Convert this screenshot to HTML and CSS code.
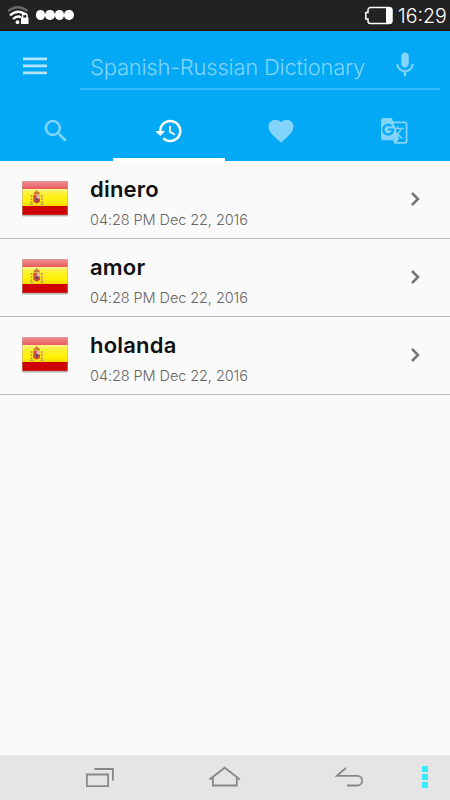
FILE: index.html
```
<!DOCTYPE html>
<html lang="en">
<head>
  <meta charset="UTF-8" />
  <meta name="viewport" content="width=device-width, initial-scale=1.0"/>
  <title>Spanish-Russian Dictionary</title>
  <link rel="stylesheet" href="styles.css">
</head>
<body>

  <!-- shared shapes -->
  <svg class="defs" width="0" height="0">
    <defs>
      <linearGradient id="red-top" x1="0" y1="0" x2="0" y2="1">
        <stop offset="0" stop-color="#f08c8e"/>
        <stop offset="1" stop-color="#e65a5e"/>
      </linearGradient>
      <linearGradient id="yellow" x1="0" y1="0" x2="0" y2="1">
        <stop offset="0" stop-color="#fff58a"/>
        <stop offset="0.3" stop-color="#fdf02c"/>
        <stop offset="0.75" stop-color="#fff000"/>
        <stop offset="1" stop-color="#f6d800"/>
      </linearGradient>
    </defs>
    <symbol id="flag" viewBox="0 0 48 37">
      <rect x="1" y="1.5" width="46" height="35" rx="1.5" fill="#000" opacity="0.25"/>
      <rect x="1" y="1" width="46" height="34.5" rx="1" fill="#b9a9a0"/>
      <rect x="1.5" y="1.4" width="45" height="7.8" fill="url(#red-top)"/>
      <rect x="1.5" y="9" width="45" height="17" fill="url(#yellow)"/>
      <rect x="1.5" y="26" width="45" height="8.8" fill="#ce0000"/>
      <path d="M10.5 15v9M21 15v9" stroke="#c98f78" stroke-width="1.6" stroke-dasharray="2 1"/>
      <path d="M9 24.2h3M19.5 24.2h3" stroke="#8a8a8a" stroke-width="1"/>
      <path d="M12.3 14.8h6.8v6.5q-3.4 4.5-6.8 0z" fill="#cf4f3e"/>
      <path d="M15.7 15H19v3.500h-3.300z" fill="#dcb9c4"/>
      <path d="M15 18.500h1.800v2.200H15z" fill="#34406e"/>
      <path d="M12.800 14.200q-.6-2.700 3-3 3.500.3 2.900 3z" fill="#c77a3c"/>
      <path d="M15.700 10v1.600" stroke="#b0703a" stroke-width="1"/>
    </symbol>
    <symbol id="chevron" viewBox="0 0 12 16">
      <path d="M2 2l6 6-6 6" fill="none" stroke="#757575" stroke-width="2.5"/>
    </symbol>
  </svg>

  <div class="status-bar">
    <svg class="wifi" width="24" height="22" viewBox="0 0 24 22">
      <g fill="none" stroke-width="2.3">
        <path d="M1 7.200Q11 -.800 20.500 7.200" stroke="#6b6b6b"/>
        <path d="M3 11.300Q11 4.500 18.500 10.500" stroke="#fff"/>
        <path d="M6 15Q10.500 11 14 13.500" stroke="#fff"/>
      </g>
      <circle cx="10.5" cy="18.2" r="1.9" fill="#fff"/>
      <path d="M15.500 14v-2.200a2.300 2.300 0 0 1 4.600 0V14" fill="none" stroke="#fff" stroke-width="1.5"/>
      <rect x="14" y="13.5" width="7.5" height="6.500" fill="#fff"/>
    </svg>
    <div class="dots"><span></span><span></span><span></span><span></span></div>
    <svg class="battery" width="30" height="19" viewBox="0 0 30 19">
      <path d="M5.500 1.500H24a3 3 0 0 1 3 3v10a3 3 0 0 1-3 3H5.500A2.500 2.500 0 0 1 3 15V13H.8V6.500H3V4a2.500 2.500 0 0 1 2.500-2.500z" fill="none" stroke="#fff" stroke-width="1.5"/>
      <rect x="21" y="1.5" width="6" height="16" rx="1.5" fill="#fff"/>
    </svg>
    <span class="clock">16:29</span>
  </div>

  <div class="header">
    <div class="toolbar">
      <svg class="menu" width="24" height="18" viewBox="0 0 24 18">
        <path d="M0 1.900h24M0 8.900h24M0 15.900h24" stroke="#b4e5fd" stroke-width="2.6"/>
      </svg>
      <div class="search-field">
        <span class="search-text">Spanish-Russian Dictionary</span>
        <svg class="mic" width="30" height="30" viewBox="0 0 24 24">
          <path d="M12 14c1.660 0 2.990-1.340 2.990-3L15 5c0-1.660-1.340-3-3-3S9 3.340 9 5v6c0 1.660 1.340 3 3 3zm5.300-3c0 3-2.540 5.100-5.300 5.100S6.700 14 6.700 11H5c0 3.410 2.720 6.230 6 6.720V21h2v-3.280c3.280-.480 6-3.300 6-6.720h-1.700z"/>
        </svg>
      </div>
    </div>
    <div class="tabs">
      <div class="tab">
        <svg width="30" height="30" viewBox="0 0 24 24">
          <path d="M15.500 14h-.790l-.280-.270C15.410 12.590 16 11.110 16 9.500 16 5.910 13.090 3 9.500 3S3 5.910 3 9.500 5.910 16 9.500 16c1.610 0 3.090-.590 4.230-1.570l.270.280v.790l5 4.990L20.490 19l-4.990-5zm-6 0C7.010 14 5 11.990 5 9.500S7.010 5 9.500 5 14 7.010 14 9.500 11.990 14 9.500 14z"/>
        </svg>
      </div>
      <div class="tab active">
        <svg width="30" height="30" viewBox="0 0 24 24">
          <path d="M13 3c-4.970 0-9 4.030-9 9H1l3.890 3.890.070.140L9 12H6c0-3.870 3.130-7 7-7s7 3.130 7 7-3.130 7-7 7c-1.930 0-3.680-.790-4.940-2.060l-1.420 1.420C8.270 19.990 10.510 21 13 21c4.970 0 9-4.030 9-9s-4.030-9-9-9zm-1 5v5l4.280 2.540.720-1.210-3.500-2.080V8H12z"/>
        </svg>
      </div>
      <div class="tab">
        <svg width="30" height="30" viewBox="0 0 24 24">
          <path d="M12 21.350l-1.450-1.320C5.400 15.360 2 12.280 2 8.500 2 5.420 4.420 3 7.500 3c1.740 0 3.410.810 4.500 2.090C13.090 3.810 14.760 3 16.500 3 19.580 3 22 5.420 22 8.500c0 3.780-3.400 6.860-8.550 11.540L12 21.350z"/>
        </svg>
      </div>
      <div class="tab">
        <svg width="30" height="30" viewBox="0 0 24 24">
          <path d="M21 4H11l-1-3H3c-1.100 0-2 .9-2 2v15c0 1.100.9 2 2 2h8l1 3h9c1.100 0 2-.9 2-2V6c0-1.100-.9-2-2-2zM7 16c-2.760 0-5-2.240-5-5s2.240-5 5-5c1.350 0 2.480.5 3.350 1.300L9.030 8.570c-.380-.360-1.040-.780-2.030-.780-1.740 0-3.150 1.440-3.150 3.210S5.260 14.210 7 14.210c2.010 0 2.840-1.440 2.920-2.410H7v-1.710h4.680c.07.310.12.610.12 1.020C11.800 13.970 9.890 16 7 16zm6.170-5.420h3.700c-.430 1.250-1.110 2.430-2.050 3.470-.310-.350-.6-.720-.860-1.100l-.790-2.370zm8.330 9.920c0 .550-.450 1-1 1H14l2-2.500-1.040-3.100 3.100 3.100.920-.920-3.300-3.250.02-.02c1.130-1.250 1.930-2.690 2.400-4.220H20v-1.300h-4.530V8h-1.290v1.290h-1.440L11.460 5.500h9.040c.55 0 1 .45 1 1v14z" transform="translate(.7 .6) scale(.96 .94)"/>
        </svg>
      </div>
    </div>
  </div>

  <div class="list">
    <div class="item">
      <svg class="flag" width="48" height="37"><use href="#flag"/></svg>
      <div class="info">
        <div class="word">dinero</div>
        <div class="date">04:28 PM Dec 22, 2016</div>
      </div>
      <svg class="chevron" width="12" height="16"><use href="#chevron"/></svg>
    </div>
    <div class="item">
      <svg class="flag" width="48" height="37"><use href="#flag"/></svg>
      <div class="info">
        <div class="word">amor</div>
        <div class="date">04:28 PM Dec 22, 2016</div>
      </div>
      <svg class="chevron" width="12" height="16"><use href="#chevron"/></svg>
    </div>
    <div class="item">
      <svg class="flag" width="48" height="37"><use href="#flag"/></svg>
      <div class="info">
        <div class="word">holanda</div>
        <div class="date">04:28 PM Dec 22, 2016</div>
      </div>
      <svg class="chevron" width="12" height="16"><use href="#chevron"/></svg>
    </div>
  </div>

  <div class="nav-bar">
    <svg class="recent" width="30" height="22" viewBox="0 0 30 22">
      <path d="M1.900 8.500h21.200v11.600H1.900zM9.500 3h18.400v11.500" fill="none" stroke="#888" stroke-width="1.8"/>
    </svg>
    <svg class="home" width="34" height="22" viewBox="0 0 34 22">
      <path d="M1.500 13.500L16.700 1.700l15.200 11.800M4.900 11.500v8h23.900v-8" fill="none" stroke="#888" stroke-width="1.8"/>
    </svg>
    <svg class="back" width="30" height="22" viewBox="0 0 30 22">
      <path d="M10.800 2L2 9.800h20.300a4.800 4.800 0 0 1 0 9.700H12" fill="none" stroke="#888" stroke-width="1.8"/>
    </svg>
    <div class="more"><span></span><span></span><span></span></div>
  </div>

</body>
</html>
```
FILE: styles.css
```
* {
  box-sizing: border-box;
}
body {
  margin: 0;
  height: 800px;
  display: flex;
  flex-direction: column;
  font-family: Inter, 'Liberation Sans', sans-serif;
  background-color: #fafafa;
  overflow: hidden;
}
svg {
  display: block;
  flex: none;
}
.defs {
  height: 0;
}
.status-bar {
  height: 31px;
  flex: none;
  display: flex;
  align-items: center;
  padding: 0 2px 0 7px;
  background-color: #222;
  border-bottom: 1px solid #210d0b;
}
.dots {
  display: flex;
  margin-left: 5px;
}
.dots span {
  width: 9.4px;
  height: 9.4px;
  border-radius: 50%;
  background-color: #fff;
}
.battery {
  margin-left: auto;
}
.clock {
  width: 53px;
  padding-left: 3px;
  padding-top: 2px;
  color: #fff;
  font-size: 19.5px;
  font-weight: 300;
  white-space: nowrap;
}
.header {
  height: 130px;
  flex: none;
  background-color: #03a9f4;
}
.toolbar {
  height: 71px;
  display: flex;
  padding: 0 10px 12px 23px;
}
.menu {
  margin-top: 26px;
}
.search-field {
  flex: 1;
  display: flex;
  justify-content: space-between;
  margin-left: 33px;
  padding: 19px 20px 0 10px;
  border-bottom: 2px solid #33b9f7;
}
.search-text {
  color: #82d4fb;
  font-size: 22px;
  font-weight: 300;
  line-height: 35px;
  letter-spacing: -0.24px;
  white-space: nowrap;
}
.mic {
  fill: #82d4fb;
}
.tabs {
  height: 59px;
  display: flex;
}
.tab {
  flex: 1;
  display: flex;
  justify-content: center;
  padding-top: 14px;
  fill: #82d4fb;
}
.tab.active {
  fill: #fff;
  border-bottom: 3px solid #fff;
}
.list {
  flex: 1;
}
.item {
  height: 78px;
  display: flex;
  border-bottom: 1px solid #bdbdbd;
  padding: 0 28px 0 21px;
}
.flag {
  margin-top: 19px;
}
.info {
  flex: 1;
  padding: 14px 0 0 21px;
}
.word {
  color: #111;
  font-size: 22px;
  font-weight: 600;
  line-height: 29px;
  letter-spacing: 0.2px;
}
.date {
  color: #666;
  font-size: 14.5px;
  font-weight: 300;
  line-height: 20px;
  letter-spacing: -0.08px;
  margin-top: 6px;
}
.chevron {
  margin-top: 30px;
}
.nav-bar {
  height: 45px;
  flex: none;
  display: flex;
  align-items: center;
  background-color: #e5e5e5;
  padding: 0 22px 1px 85px;
}
.home {
  margin-left: 93px;
}
.back {
  margin-left: 93px;
}
.more {
  display: flex;
  flex-direction: column;
  gap: 2px;
  margin-left: auto;
}
.more span {
  width: 6px;
  height: 6px;
  background-color: #35edff;
}
```
